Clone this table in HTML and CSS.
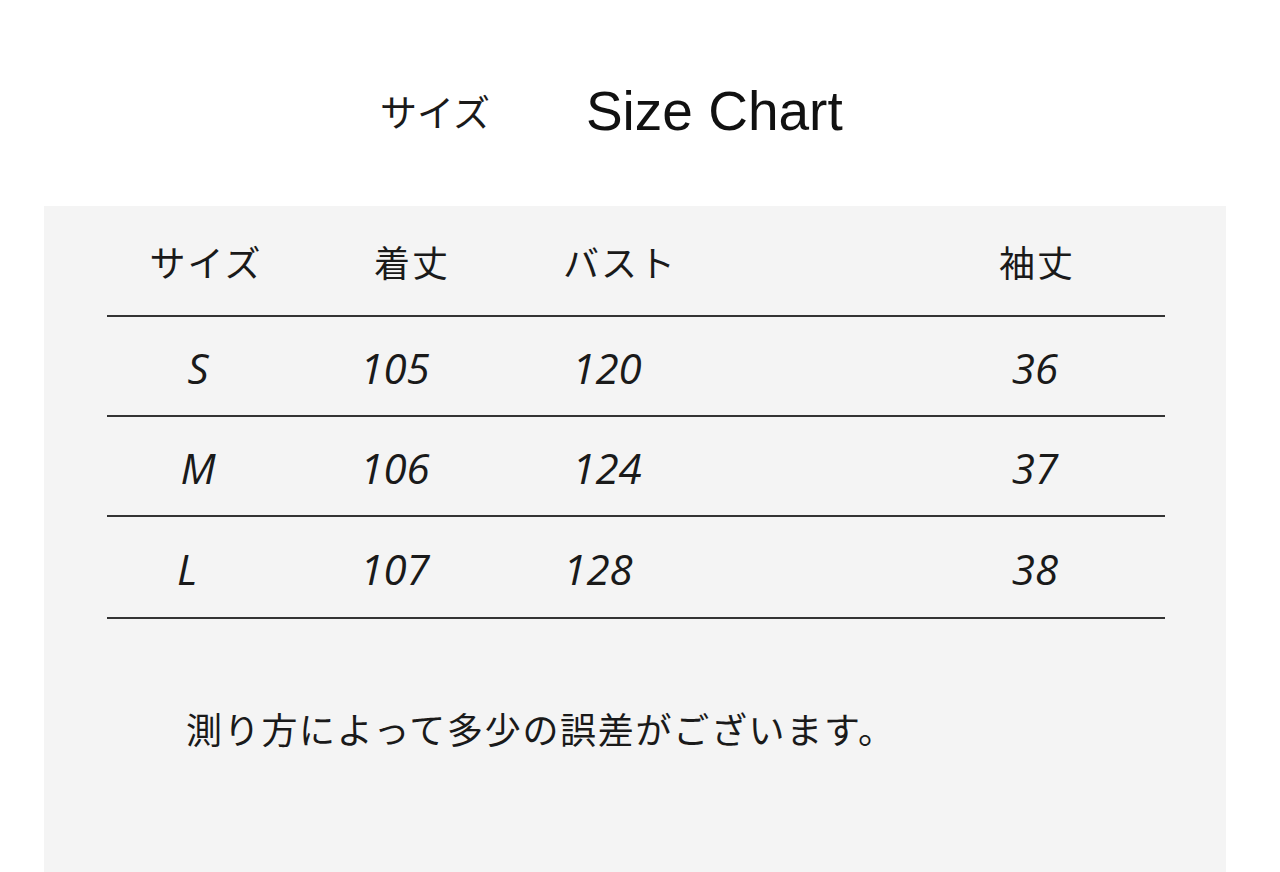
FILE: index.html
```html
<!DOCTYPE html>
<html lang="ja">
<head>
<meta charset="utf-8">
<title>Size Chart</title>
<link rel="stylesheet" href="styles.css">
</head>
<body>
<header class="title">
  <span class="title-jp">サイズ</span>
  <span class="title-en">Size Chart</span>
</header>
<section class="panel">
  <div class="table">
    <div class="row head">
      <span class="cell">サイズ</span>
      <span class="cell">着丈</span>
      <span class="cell">バスト</span>
      <span class="cell spacer"></span>
      <span class="cell">袖丈</span>
    </div>
    <div class="row data">
      <span class="cell c1">S</span>
      <span class="cell c2">105</span>
      <span class="cell c3">120</span>
      <span class="cell spacer"></span>
      <span class="cell c5">36</span>
    </div>
    <div class="row data">
      <span class="cell c1">M</span>
      <span class="cell c2">106</span>
      <span class="cell c3">124</span>
      <span class="cell spacer"></span>
      <span class="cell c5">37</span>
    </div>
    <div class="row data last">
      <span class="cell c1 shift-l">L</span>
      <span class="cell c2">107</span>
      <span class="cell c3 shift-l">128</span>
      <span class="cell spacer"></span>
      <span class="cell c5">38</span>
    </div>
  </div>
  <p class="note">測り方によって多少の誤差がございます。</p>
</section>
</body>
</html>
```

FILE: styles.css
```css
html, body {
  margin: 0;
  padding: 0;
  background: #ffffff;
  color: #1a1a1a;
  overflow: hidden;
}

body {
  width: 1280px;
  height: 872px;
  font-family: "Noto Sans CJK JP", "Noto Sans", sans-serif;
}

.title {
  height: 206px;
  display: flex;
  align-items: center;
  padding-left: 380px;
  padding-top: 16px;
  box-sizing: border-box;
  gap: 96px;
}

.title-jp {
  font-family: "Noto Sans CJK JP", sans-serif;
  font-size: 37px;
  font-weight: 400;
  letter-spacing: 0;
  color: #1a1a1a;
}

.title-en {
  font-family: "Liberation Sans", Arial, sans-serif;
  font-size: 55px;
  color: #111;
}

.panel {
  margin-left: 44px;
  width: 1182px;
  height: 666px;
  background: #f4f4f4;
  padding: 0 61px 0 63px;
  box-sizing: border-box;
}

.table {
  display: flex;
  flex-direction: column;
}

.row {
  display: grid;
  grid-template-columns: 198px 214px 202px 1fr 212px;
  padding-right: 22px;
  align-items: center;
  border-bottom: 2px solid #333333;
}

.cell {
  text-align: center;
}

.head {
  height: 111px;
  padding-top: 0;
  box-sizing: border-box;
}

.head .cell {
  font-family: "Noto Sans CJK JP", sans-serif;
  font-size: 36px;
  font-weight: 400;
  color: #1a1a1a;
  letter-spacing: 2px;
}

.data {
  height: 100px;
  box-sizing: border-box;
  padding-top: 2px;
}

.data.last {
  height: 102px;
}

.data .cell {
  font-family: "Open Sans", "Noto Sans", sans-serif;
  font-style: italic;
  font-size: 42px;
  color: #1a1a1a;
}

.data .c1 { padding-right: 16px; }
.data .c2 { padding-right: 34px; }
.data .c3 { padding-right: 26px; }
.data .c5 { padding-right: 4px; }
.data .c1.shift-l { padding-right: 38px; }
.data .c3.shift-l { padding-right: 44px; }

.note {
  margin: 84px 0 0 79px;
  font-family: "Noto Sans CJK JP", sans-serif;
  font-size: 36px;
  font-weight: 400;
  color: #1a1a1a;
  letter-spacing: 1.7px;
  line-height: 50px;
}
```
